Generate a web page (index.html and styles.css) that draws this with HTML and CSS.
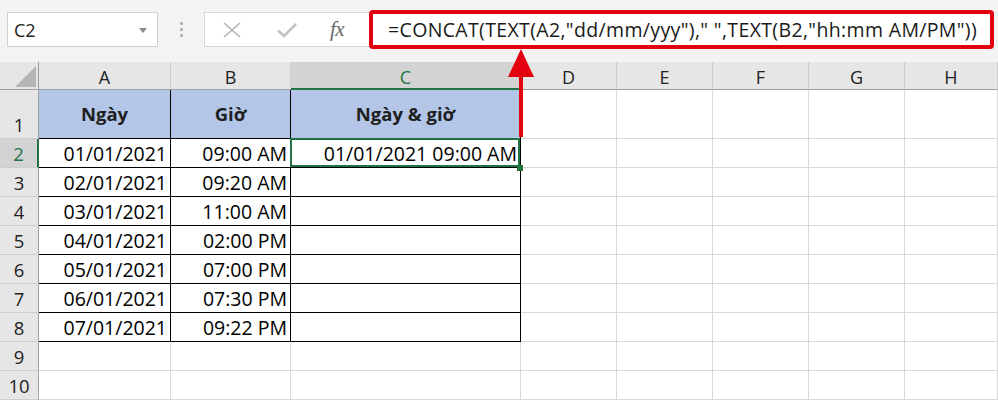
FILE: index.html
```html
<!DOCTYPE html>
<html lang="vi">
<head>
<meta charset="utf-8">
<title>Excel CONCAT</title>
<link rel="stylesheet" href="styles.css">
</head>
<body>
<div class="app">
  <div class="topbar">
    <div class="namebox">
      <span class="name">C2</span>
      <svg class="dd" width="8" height="5" viewBox="0 0 8 5"><path d="M0 0 L8 0 L4 5 Z" fill="#8a8a8a"/></svg>
    </div>
    <div class="grip"><i></i><i></i><i></i></div>
    <div class="fxbtns">
      <svg class="btn-x" width="18" height="16" viewBox="0 0 18 16"><path d="M1 1 L17 15 M17 1 L1 15" stroke="#b4b4b4" stroke-width="1.6" fill="none"/></svg>
      <svg class="btn-ok" width="20" height="16" viewBox="0 0 20 16"><path d="M1 8.5 L7 14 L19 2" stroke="#c2c2c2" stroke-width="2.6" fill="none"/></svg>
      <span class="fx">fx</span>
    </div>
    <div class="formula">=CONCAT(TEXT(A2,"dd/mm/yyy")," ",TEXT(B2,"hh:mm AM/PM"))</div>
  </div>

  <div class="sheet">
    <div class="ch corner"><svg class="tri" width="21" height="21" viewBox="0 0 21 21"><path d="M21 0 L21 21 L0 21 Z" fill="#b6b6b6"/></svg></div>
    <div class="ch">A</div>
    <div class="ch">B</div>
    <div class="ch ch-sel">C</div>
    <div class="ch">D</div>
    <div class="ch">E</div>
    <div class="ch">F</div>
    <div class="ch">G</div>
    <div class="ch">H</div>

    <div class="rh">1</div>
    <div class="c t th">Ngày</div>
    <div class="c t th">Giờ</div>
    <div class="c t th">Ngày &amp; giờ</div>
    <div class="c"></div><div class="c"></div><div class="c"></div><div class="c"></div><div class="c"></div>

    <div class="rh rh-sel">2</div>
    <div class="c t">01/01/2021</div>
    <div class="c t">09:00 AM</div>
    <div class="c t sel">01/01/2021 09:00 AM</div>
    <div class="c"></div><div class="c"></div><div class="c"></div><div class="c"></div><div class="c"></div>

    <div class="rh">3</div>
    <div class="c t">02/01/2021</div>
    <div class="c t">09:20 AM</div>
    <div class="c t"></div>
    <div class="c"></div><div class="c"></div><div class="c"></div><div class="c"></div><div class="c"></div>

    <div class="rh">4</div>
    <div class="c t">03/01/2021</div>
    <div class="c t">11:00 AM</div>
    <div class="c t"></div>
    <div class="c"></div><div class="c"></div><div class="c"></div><div class="c"></div><div class="c"></div>

    <div class="rh">5</div>
    <div class="c t">04/01/2021</div>
    <div class="c t">02:00 PM</div>
    <div class="c t"></div>
    <div class="c"></div><div class="c"></div><div class="c"></div><div class="c"></div><div class="c"></div>

    <div class="rh">6</div>
    <div class="c t">05/01/2021</div>
    <div class="c t">07:00 PM</div>
    <div class="c t"></div>
    <div class="c"></div><div class="c"></div><div class="c"></div><div class="c"></div><div class="c"></div>

    <div class="rh">7</div>
    <div class="c t">06/01/2021</div>
    <div class="c t">07:30 PM</div>
    <div class="c t"></div>
    <div class="c"></div><div class="c"></div><div class="c"></div><div class="c"></div><div class="c"></div>

    <div class="rh">8</div>
    <div class="c t">07/01/2021</div>
    <div class="c t">09:22 PM</div>
    <div class="c t"></div>
    <div class="c"></div><div class="c"></div><div class="c"></div><div class="c"></div><div class="c"></div>

    <div class="rh">9</div>
    <div class="c"></div><div class="c"></div><div class="c"></div>
    <div class="c"></div><div class="c"></div><div class="c"></div><div class="c"></div><div class="c"></div>

    <div class="rh">10</div>
    <div class="c"></div><div class="c"></div><div class="c"></div>
    <div class="c"></div><div class="c"></div><div class="c"></div><div class="c"></div><div class="c"></div>
  </div>

  <svg class="arrow" width="30" height="90" viewBox="0 0 30 90">
    <path d="M15 0 L28 28 L2 28 Z" fill="#e3000f"/>
    <rect x="13" y="26" width="4" height="62" fill="#e3000f"/>
  </svg>
</div>
</body>
</html>
```

FILE: styles.css
```css
* { box-sizing: border-box; }
html, body { margin: 0; padding: 0; }
body {
  width: 998px;
  height: 400px;
  overflow: hidden;
  background: #ffffff;
  font-family: "Open Sans", "Noto Sans", "DejaVu Sans", sans-serif;
  color: #000;
}
.app { position: relative; width: 998px; height: 400px; }

.topbar {
  height: 62px;
  background: #f3f3f3;
  display: flex;
  align-items: flex-start;
  padding: 10px 0 0 7px;
}
.namebox {
  margin-top: 2px;
  width: 151px;
  height: 35px;
  background: #fff;
  border: 1px solid #cfcfcf;
  display: flex;
  align-items: center;
  justify-content: space-between;
  padding: 0 10px 0 6px;
}
.name { font-size: 18px; color: #222; }
.dd { margin-top: 1px; }
.grip {
  width: 46px;
  height: 39px;
  display: flex;
  flex-direction: column;
  align-items: center;
  justify-content: center;
  gap: 3px;
}
.grip i { display: block; width: 3px; height: 3px; background: #a8a8a8; border-radius: 50%; }
.fxbtns {
  margin-top: 2px;
  width: 165px;
  height: 35px;
  background: #fff;
  border: 1px solid #d6d6d6;
  border-right: none;
  display: flex;
  align-items: center;
  padding-left: 18px;
}
.btn-x { margin-right: 36px; }
.btn-ok { margin-right: 33px; }
.fx {
  font-family: "Liberation Serif", "DejaVu Serif", serif;
  font-style: italic;
  font-size: 21px;
  color: #666;
  letter-spacing: -0.5px;
}
.formula {
  width: 625px;
  height: 39px;
  background: #fff;
  border: 4px solid #e3000f;
  border-radius: 4px;
  display: flex;
  align-items: center;
  padding-left: 15px;
  font-size: 19.5px;
  letter-spacing: 0.35px;
  color: #1a1a1a;
  white-space: nowrap;
  overflow: hidden;
}

.sheet {
  display: grid;
  grid-template-columns: 39px 132px 120px 230px 96px 96px 96px 96px 93px;
  grid-template-rows: 28px 49px repeat(9, 29px);
}
.ch {
  background: #e6e6e6;
  border-right: 1px solid #cdcdcd;
  border-bottom: 1px solid #9f9f9f;
  text-align: center;
  font-size: 18px;
  line-height: 26px;
  padding-top: 2px;
  color: #222;
}
.corner { position: relative; border-right: 1px solid #9f9f9f; }
.tri { position: absolute; right: 2px; bottom: 2px; }
.ch-sel {
  background: #d3d3d3;
  color: #217346;
  border-bottom: 2px solid #217346;
}
.rh {
  background: #e6e6e6;
  border-right: 1px solid #9f9f9f;
  border-bottom: 1px solid #cdcdcd;
  text-align: center;
  font-size: 18.5px;
  line-height: 26px;
  display: flex;
  align-items: flex-end;
  justify-content: center;
  padding-bottom: 0;
  color: #222;
}
.rh-sel {
  background: #d3d3d3;
  color: #217346;
  border-right: 2px solid #217346;
}
.c {
  border-right: 1px solid #d9d9d9;
  border-bottom: 1px solid #d9d9d9;
  font-size: 19.5px;
  line-height: 26px;
  padding: 2px 3px 0 0;
  text-align: right;
  white-space: nowrap;
}
.t { border-right-color: #000; border-bottom-color: #000; }
.th {
  background: #b4c6e7;
  font-weight: bold;
  text-align: center;
  padding: 11px 0 0 0;
  font-size: 18.5px;
  color: #1f1f1f;
}
.sel { position: relative; z-index: 2; }
.sel::before {
  content: "";
  position: absolute;
  left: -1px;
  top: -1px;
  right: 0;
  bottom: 0;
  border: 2px solid #217346;
}
.sel::after {
  content: "";
  position: absolute;
  left: 226px;
  top: 26px;
  width: 6px;
  height: 6px;
  background: #217346;
}
.arrow {
  position: absolute;
  left: 506px;
  top: 49px;
  z-index: 5;
}
```
